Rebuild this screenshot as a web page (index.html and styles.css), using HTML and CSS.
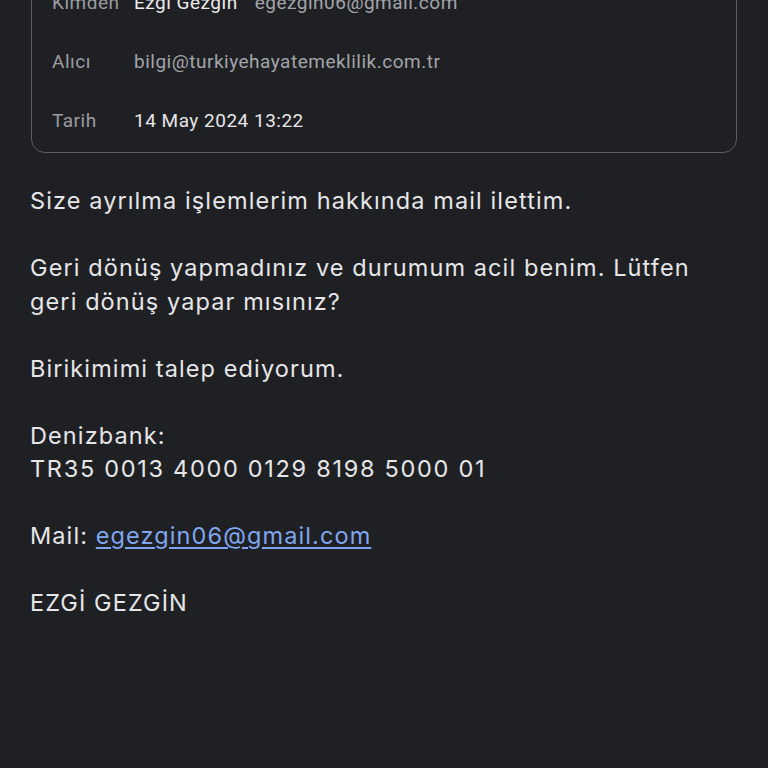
FILE: index.html
```html
<!DOCTYPE html>
<html lang="tr">
<head>
<meta charset="utf-8">
<link rel="stylesheet" href="styles.css">
</head>
<body>
<div class="page">
  <div class="card">
    <div class="row"><span class="label">Kimden</span><span class="value"><span class="name">Ezgi Gezgin</span><span class="muted">egezgin06@gmail.com</span></span></div>
    <div class="row"><span class="label">Alıcı</span><span class="value muted">bilgi@turkiyehayatemeklilik.com.tr</span></div>
    <div class="row"><span class="label">Tarih</span><span class="value">14 May 2024 13:22</span></div>
  </div>
  <div class="body">
    <p>Size ayrılma işlemlerim hakkında mail ilettim.</p>
    <p>Geri dönüş yapmadınız ve durumum acil benim. Lütfen<br>geri dönüş yapar mısınız?</p>
    <p>Birikimimi talep ediyorum.</p>
    <p>Denizbank:<br><span class="iban">TR35 0013 4000 0129 8198 5000 01</span></p>
    <p>Mail: <a href="#">egezgin06@gmail.com</a></p>
    <p>EZGİ GEZGİN</p>
  </div>
</div>
</body>
</html>
```
FILE: styles.css
```css
html, body {
  margin: 0;
  padding: 0;
  background: #1f2024;
  height: 100%;
  overflow: hidden;
}
.page {
  padding: 0 31px;
}
.card {
  margin-top: -28px;
  border: 1.5px solid #5c5e63;
  border-radius: 14px;
  padding: 0 20px 2px 20px;
  font-family: Roboto, "Liberation Sans", sans-serif;
  font-size: 19px;
  letter-spacing: 0.5px;
}
.row {
  display: flex;
  height: 59px;
  align-items: center;
}
.label {
  width: 82px;
  color: #9a9ca1;
}
.value {
  color: #e6e6e8;
}
.name {
  color: #ececee;
  margin-right: 17px;
}
.muted {
  color: #a3a5aa;
}
.body {
  margin-top: 31px;
  font-family: Inter, "Open Sans", sans-serif;
  font-size: 23.5px;
  letter-spacing: 1.1px;
  line-height: 33.5px;
  color: #e6e6e8;
  margin-left: -1px;
}
.body p {
  margin: 0 0 33.5px 0;
}
.body .iban {
  letter-spacing: 1.7px;
}
.body a {
  color: #7fa6ef;
  text-decoration: underline;
  text-underline-offset: 3px;
  text-decoration-thickness: 1.5px;
}
```
